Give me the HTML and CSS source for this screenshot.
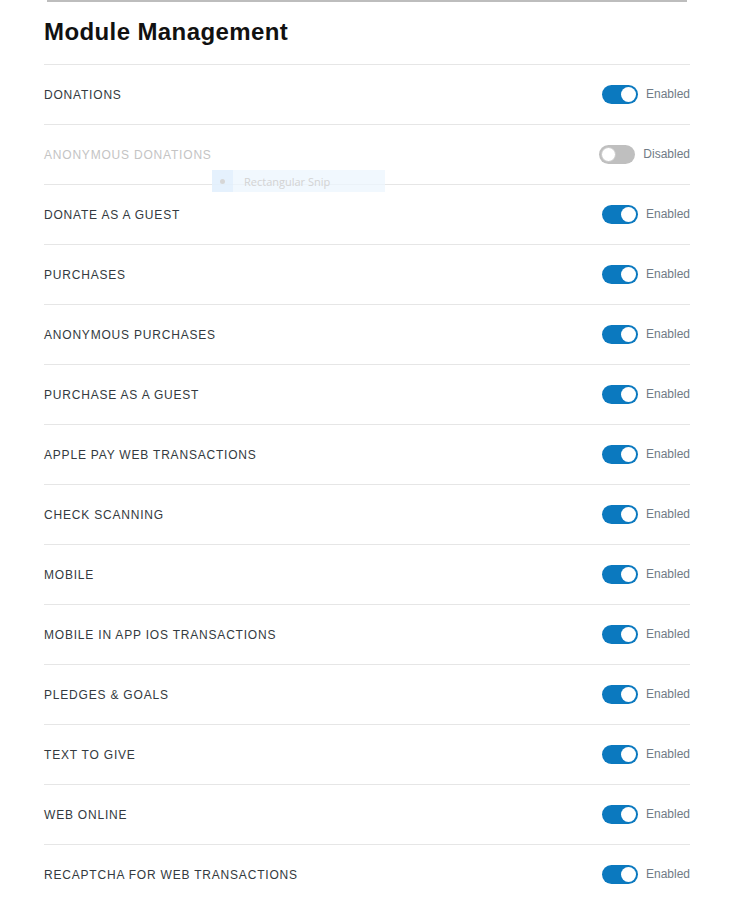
FILE: index.html
```html
<!DOCTYPE html>
<html lang="en">
<head>
<meta charset="utf-8">
<title>Module Management</title>
<link rel="stylesheet" href="styles.css">
</head>
<body>
<div class="page">
  <div class="topline"></div>
  <h1 class="title">Module Management</h1>
  <ul class="modules">
    <li class="row"><span class="name">Donations</span><span class="status"><span class="toggle on"></span><span class="state">Enabled</span></span></li>
    <li class="row disabled"><span class="name">Anonymous Donations</span><span class="status"><span class="toggle off"></span><span class="state">Disabled</span></span></li>
    <li class="row"><span class="name">Donate as a Guest</span><span class="status"><span class="toggle on"></span><span class="state">Enabled</span></span></li>
    <li class="row"><span class="name">Purchases</span><span class="status"><span class="toggle on"></span><span class="state">Enabled</span></span></li>
    <li class="row"><span class="name">Anonymous Purchases</span><span class="status"><span class="toggle on"></span><span class="state">Enabled</span></span></li>
    <li class="row"><span class="name">Purchase as a Guest</span><span class="status"><span class="toggle on"></span><span class="state">Enabled</span></span></li>
    <li class="row"><span class="name">Apple Pay Web Transactions</span><span class="status"><span class="toggle on"></span><span class="state">Enabled</span></span></li>
    <li class="row"><span class="name">Check Scanning</span><span class="status"><span class="toggle on"></span><span class="state">Enabled</span></span></li>
    <li class="row"><span class="name">Mobile</span><span class="status"><span class="toggle on"></span><span class="state">Enabled</span></span></li>
    <li class="row"><span class="name">Mobile In App iOS Transactions</span><span class="status"><span class="toggle on"></span><span class="state">Enabled</span></span></li>
    <li class="row"><span class="name">Pledges &amp; Goals</span><span class="status"><span class="toggle on"></span><span class="state">Enabled</span></span></li>
    <li class="row"><span class="name">Text to Give</span><span class="status"><span class="toggle on"></span><span class="state">Enabled</span></span></li>
    <li class="row"><span class="name">Web Online</span><span class="status"><span class="toggle on"></span><span class="state">Enabled</span></span></li>
    <li class="row"><span class="name">reCAPTCHA for Web Transactions</span><span class="status"><span class="toggle on"></span><span class="state">Enabled</span></span></li>
  </ul>
  <div class="snip"><span class="snip-icon"><span class="snip-dot"></span></span><span class="snip-text">Rectangular Snip</span></div>
</div>
</body>
</html>
```

FILE: styles.css
```css
html, body {
  margin: 0;
  padding: 0;
  background: #ffffff;
}

.page {
  position: relative;
  width: 646px;
  margin-left: 44px;
  font-family: "Liberation Sans", Arial, sans-serif;
}

.topline {
  height: 2px;
  margin: 0 3px;
  background: #bdbdbd;
}

.title {
  margin: 0;
  padding-top: 15px;
  height: 47px;
  box-sizing: content-box;
  font-size: 24px;
  line-height: 30px;
  font-weight: 700;
  letter-spacing: 0.4px;
  color: #111111;
}

.modules {
  list-style: none;
  margin: 0;
  padding: 0;
}

.row {
  display: flex;
  align-items: center;
  justify-content: space-between;
  height: 59px;
  border-top: 1px solid #e6e6e6;
}

.name {
  font-size: 12px;
  letter-spacing: 0.8px;
  text-transform: uppercase;
  color: #333a40;
}

.row.disabled .name {
  color: #c4c4c4;
}

.status {
  display: flex;
  align-items: center;
  gap: 7px;
}

.state {
  margin-top: -2px;
  font-size: 12px;
  color: #6f7b86;
}

.toggle {
  position: relative;
  width: 36px;
  height: 19px;
  margin-top: -1px;
  margin-right: 1px;
  border-radius: 10px;
  box-sizing: border-box;
}

.toggle::after {
  content: "";
  position: absolute;
  top: 2px;
  width: 15px;
  height: 15px;
  border-radius: 50%;
  background: #ffffff;
  box-sizing: border-box;
}

.toggle.on {
  background: #0b79bf;
}

.toggle.on::after {
  right: 2px;
}

.toggle.off {
  background: #bfbfbf;
}

.toggle.off::after {
  left: 2px;
  border: 1px solid #c9c9c9;
}

.snip {
  position: absolute;
  left: 168px;
  top: 170px;
  width: 173px;
  height: 22px;
  display: flex;
  align-items: center;
  background: rgba(236, 245, 254, 0.75);
}

.snip-icon {
  width: 21px;
  height: 22px;
  display: flex;
  align-items: center;
  justify-content: center;
  background: rgba(222, 237, 251, 0.6);
}

.snip-dot {
  width: 5px;
  height: 5px;
  border-radius: 50%;
  background: #d6d6d6;
}

.snip-text {
  margin-left: 11px;
  font-family: "Open Sans", sans-serif;
  font-size: 11px;
  color: #d3d3d3;
}
```
